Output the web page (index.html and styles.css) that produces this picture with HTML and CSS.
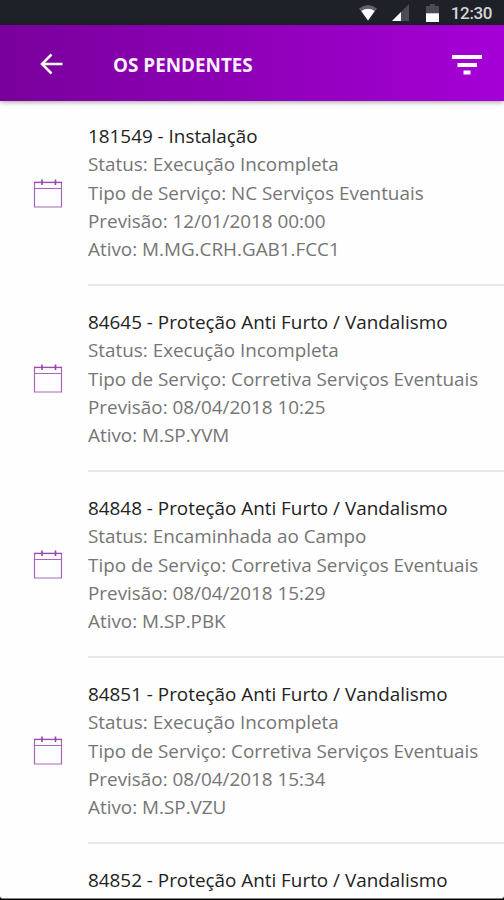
FILE: index.html
```html
<!DOCTYPE html>
<html lang="pt-BR">

<head>
    <meta charset="UTF-8">
    <meta name="viewport" content="width=device-width, initial-scale=1.0">
    <title>OS Pendentes</title>
    <link rel="stylesheet" href="styles.css">
</head>

<body>
    <svg class="symbols" width="0" height="0">
        <symbol id="calendar" viewBox="0 0 30 30">
            <path d="M1.5 3.5h27v24.5h-27z M1.5 9.5h27" fill="none" stroke="#a565b8" stroke-width="1.2" />
            <path d="M1 3.4h28" stroke="#9a4bb0" stroke-width="1.4" />
            <path d="M9 .5v5.5M22.5 .5v5.5" stroke="#9445ab" stroke-width="1.6" />
        </symbol>
    </svg>

    <div class="screen">
        <div class="status-bar">
            <svg class="wifi" width="18" height="16" viewBox="0 0 18 16">
                <path d="M0 3.5Q9-3.5 18 3.5L9 15.5z" fill="#60626a" />
                <path d="M2.3 6Q9 1.5 15.7 6L9 15.5z" fill="#fff" />
            </svg>
            <svg class="signal" width="17" height="17" viewBox="0 0 17 17">
                <path d="M17 0v17H0z" fill="#4b4c54" />
                <path d="M9 8v9H0z" fill="#fff" />
            </svg>
            <svg class="battery" width="13" height="18" viewBox="0 0 13 18">
                <path d="M0 2h4V0h5v2h4v8H0z" fill="#4b4c54" />
                <path d="M0 9.3h13V18H0z" fill="#fff" />
            </svg>
            <span class="clock">12:30</span>
        </div>

        <header class="toolbar">
            <svg class="back" width="24" height="22" viewBox="0 0 24 22">
                <path d="M22.5 11H2.5M11.5 1.5L2 11l9.5 9.5" fill="none" stroke="#fff" stroke-width="2.5" />
            </svg>
            <h1>OS PENDENTES</h1>
            <svg class="filter" width="30" height="20" viewBox="0 0 30 20">
                <path d="M0 0h30v4H0zM5.5 8h19.5v4H5.5zM11.5 15.5h7v4h-7z" fill="#fff" />
            </svg>
        </header>

        <ul class="list">
            <li>
                <svg class="calendar"><use href="#calendar" /></svg>
                <div class="info">
                    <h2>181549 - Instalação</h2>
                    <p>Status: Execução Incompleta</p>
                    <p>Tipo de Serviço: NC Serviços Eventuais</p>
                    <p>Previsão: 12/01/2018 00:00</p>
                    <p>Ativo: M.MG.CRH.GAB1.FCC1</p>
                </div>
            </li>
            <li>
                <svg class="calendar"><use href="#calendar" /></svg>
                <div class="info">
                    <h2>84645 - Proteção Anti Furto / Vandalismo</h2>
                    <p>Status: Execução Incompleta</p>
                    <p>Tipo de Serviço: Corretiva Serviços Eventuais</p>
                    <p>Previsão: 08/04/2018 10:25</p>
                    <p>Ativo: M.SP.YVM</p>
                </div>
            </li>
            <li>
                <svg class="calendar"><use href="#calendar" /></svg>
                <div class="info">
                    <h2>84848 - Proteção Anti Furto / Vandalismo</h2>
                    <p>Status: Encaminhada ao Campo</p>
                    <p>Tipo de Serviço: Corretiva Serviços Eventuais</p>
                    <p>Previsão: 08/04/2018 15:29</p>
                    <p>Ativo: M.SP.PBK</p>
                </div>
            </li>
            <li>
                <svg class="calendar"><use href="#calendar" /></svg>
                <div class="info">
                    <h2>84851 - Proteção Anti Furto / Vandalismo</h2>
                    <p>Status: Execução Incompleta</p>
                    <p>Tipo de Serviço: Corretiva Serviços Eventuais</p>
                    <p>Previsão: 08/04/2018 15:34</p>
                    <p>Ativo: M.SP.VZU</p>
                </div>
            </li>
            <li>
                <div class="info">
                    <h2>84852 - Proteção Anti Furto / Vandalismo</h2>
                </div>
            </li>
        </ul>
    </div>
</body>

</html>
```

FILE: styles.css
```css
* {
    box-sizing: border-box;
}

body,
h1,
h2,
p,
ul {
    margin: 0;
    padding: 0;
}

body {
    background: #000;
    font-family: "Open Sans", "Noto Sans", sans-serif;
}

.symbols {
    display: block;
}

.screen {
    display: flex;
    flex-direction: column;
    height: 899px;
    overflow: hidden;
    background: #fefefe;
    border-bottom: 1px solid #85858a;
    border-radius: 0 0 3px 3px;
}

.status-bar {
    display: flex;
    flex: none;
    align-items: center;
    justify-content: flex-end;
    height: 25px;
    padding-right: 12px;
    background: #1f2128;
}

.wifi {
    margin-right: 15px;
}

.signal {
    margin-right: 17px;
}

.battery {
    margin-right: 12px;
}

.clock {
    color: #d5d6d8;
    font: 500 17px/25px Roboto, sans-serif;
    letter-spacing: -.4px;
    padding-top: 2px;
}

.toolbar {
    z-index: 1;
    display: flex;
    flex: none;
    align-items: center;
    height: 76px;
    padding: 2px 22px 0 40px;
    background: linear-gradient(to right, #79009b, #a500d6);
    box-shadow: 0 1px 5px rgba(0, 0, 0, .4);
}

.toolbar h1 {
    margin-left: 49px;
    color: #fbeeff;
    font-size: 18.87px;
    font-weight: 700;
    line-height: 28px;
    padding-top: 2px;
}

.filter {
    margin-left: auto;
    margin-top: 2px;
}

.list {
    list-style: none;
}

.list li {
    display: flex;
    align-items: center;
    height: 186px;
    padding-left: 33px;
}

.list li:first-child {
    height: 185px;
}

.calendar {
    flex: none;
    width: 30px;
    height: 30px;
    margin-right: 25px;
}

.list li:last-child {
    padding-left: 88px;
}

.info {
    flex: 1;
    height: 100%;
    padding-top: 22px;
    border-bottom: 2px solid #e6e6e6;
    color: #757575;
    font-size: 18.87px;
    line-height: 28.3px;
    white-space: nowrap;
}

.list li:first-child .info {
    padding-top: 21px;
}

.info h2 {
    color: #222;
    font-size: 18.87px;
    font-weight: 400;
    line-height: 28.3px;
}
```
